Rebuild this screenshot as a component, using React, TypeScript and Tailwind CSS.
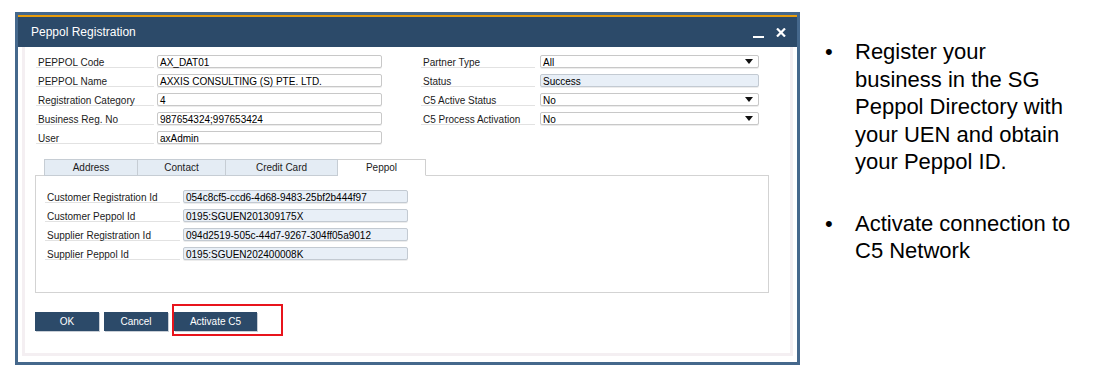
import React from 'react';

const ui = "font-['Liberation_Sans',Arial,sans-serif]";

const topLeft = [
  { label: 'PEPPOL Code', value: 'AX_DAT01' },
  { label: 'PEPPOL Name', value: 'AXXIS CONSULTING (S) PTE. LTD.' },
  { label: 'Registration Category', value: '4' },
  { label: 'Business Reg. No', value: '987654324;997653424' },
  { label: 'User', value: 'axAdmin' },
];

const topRight = [
  { label: 'Partner Type', value: 'All', kind: 'select' },
  { label: 'Status', value: 'Success', kind: 'readonly' },
  { label: 'C5 Active Status', value: 'No', kind: 'select' },
  { label: 'C5 Process Activation', value: 'No', kind: 'select' },
];

const peppolFields = [
  { label: 'Customer Registration Id', value: '054c8cf5-ccd6-4d68-9483-25bf2b444f97' },
  { label: 'Customer Peppol Id', value: '0195:SGUEN201309175X' },
  { label: 'Supplier Registration Id', value: '094d2519-505c-44d7-9267-304ff05a9012' },
  { label: 'Supplier Peppol Id', value: '0195:SGUEN202400008K' },
];

const tabs = [
  { name: 'Address', w: 'w-[94px]' },
  { name: 'Contact', w: 'w-[88px]' },
  { name: 'Credit Card', w: 'w-[112px]' },
  { name: 'Peppol', w: 'w-[88px]', active: true },
];

function Arrow() {
  return (
    <svg width="8" height="5" viewBox="0 0 8 5" className="shrink-0">
      <path d="M0 0h8L4 5z" fill="#111" />
    </svg>
  );
}

function Label({ text, w }: { text: string; w: string }) {
  return (
    <div className={`${w} h-[13px] shrink-0 border-b border-[#e2e2e2] pl-[2px] text-[10px] leading-[15px] text-[#1b1b1b] whitespace-nowrap`}>
      {text}
    </div>
  );
}

function Input({ value, w, kind }: { value: string; w: string; kind?: string }) {
  const bg = kind === 'readonly' ? 'bg-[#e8eff7] border-[#c3cad2]' : 'bg-white border-[#c8c8c8]';
  return (
    <div className={`${w} h-[13px] shrink-0 flex items-center justify-between border rounded-[2px] ${bg} pl-[2px] pr-[5px] shadow-[0_1px_0_#ececec] text-[10px] leading-[11px] text-black whitespace-nowrap`}>
      <span className="pt-px">{value}</span>
      {kind === 'select' && <Arrow />}
    </div>
  );
}

function Dialog() {
  return (
    <div className={`${ui} mt-[12px] ml-[15px] w-[785px] h-[353px] shrink-0 bg-[#45688c] p-[3px] flex flex-col`}>
      <div className="h-[2px] bg-[#e99c0a]" />
      <div className="h-[30px] bg-[#2c4a69] flex items-center justify-between pl-[13px] pr-[11px]">
        <span className="text-white text-[12px]">Peppol Registration</span>
        <div className="flex items-center gap-[12px]">
          <div className="w-[11px] h-[2px] bg-white mt-[9px]" />
          <svg width="10" height="9" viewBox="0 0 10 9">
            <path d="M1 0.5l8 8M9 0.5l-8 8" stroke="#fff" strokeWidth="2.2" />
          </svg>
        </div>
      </div>
      <div className="flex-1 bg-white px-[4px] pb-[6px] flex">
        <div className="flex-1 border-x-[3px] border-b-[3px] border-[#f4eff2] bg-white pl-[11px] pt-[8px] flex flex-col">
          <div className="flex gap-[39px]">
            <div className="flex flex-col gap-[6px]">
              {topLeft.map((f) => (
                <div key={f.label} className="flex gap-[3px]">
                  <Label text={f.label} w="w-[118px]" />
                  <Input value={f.value} w="w-[225px]" />
                </div>
              ))}
            </div>
            <div className="flex flex-col gap-[6px]">
              {topRight.map((f) => (
                <div key={f.label} className="flex gap-[5px]">
                  <Label text={f.label} w="w-[114px]" />
                  <Input value={f.value} w="w-[219px]" kind={f.kind} />
                </div>
              ))}
            </div>
          </div>

          <div className="ml-[-1px] mt-[15px] w-[734px]">
            <div className="flex pl-[9px]">
              {tabs.map((t, i) => (
                <div
                  key={t.name}
                  className={`${t.w} h-[17px] flex items-center justify-center border-t border-r border-[#c6cdd4] text-[10px] text-[#1b1b1b] ${i === 0 ? 'border-l' : ''} ${t.active ? 'bg-white border-b border-b-white relative z-10 border-[#d0d0d0]' : 'bg-[#e4ecf4] border-b'}`}
                >
                  {t.name}
                </div>
              ))}
            </div>
            <div className="-mt-px h-[118px] border border-[#d3d3d3] pl-[9px] pt-[14px] flex flex-col gap-[6px]">
              {peppolFields.map((f) => (
                <div key={f.label} className="flex gap-[3px]">
                  <Label text={f.label} w="w-[135px]" />
                  <Input value={f.value} w="w-[225px]" kind="readonly" />
                </div>
              ))}
            </div>
          </div>

          <div className="relative mt-[19px] ml-[-1px] flex gap-[5px]">
            <button className="w-[64px] h-[19px] bg-[#2c4a69] text-white text-[10px] shadow-[1px_1px_0_#c8ced6]">OK</button>
            <button className="w-[64px] h-[19px] bg-[#2c4a69] text-white text-[10px] shadow-[1px_1px_0_#c8ced6]">Cancel</button>
            <button className="ml-[1px] w-[83px] h-[19px] bg-[#2c4a69] text-white text-[10px] shadow-[1px_1px_0_#c8ced6]">Activate C5</button>
            <div className="absolute left-[137px] top-[-8px] w-[111px] h-[32px] border-2 border-[#e8141c]" />
          </div>
        </div>
      </div>
    </div>
  );
}

function Notes() {
  const items = [
    'Register your business in the SG Peppol Directory with your UEN and obtain your Peppol ID.',
    'Activate connection to C5 Network',
  ];
  return (
    <div className="font-['Liberation_Sans',Arial,sans-serif] text-[22px] leading-[27.5px] text-black pl-[25px] pt-[38px] flex flex-col gap-[34px]">
      {items.map((t) => (
        <div key={t} className="flex">
          <span className="w-[30px] shrink-0">•</span>
          <span className="w-[220px]">{t}</span>
        </div>
      ))}
    </div>
  );
}

export default function App() {
  return (
    <div className="w-[1099px] h-[369px] bg-white flex overflow-hidden">
      <Dialog />
      <Notes />
    </div>
  );
}
